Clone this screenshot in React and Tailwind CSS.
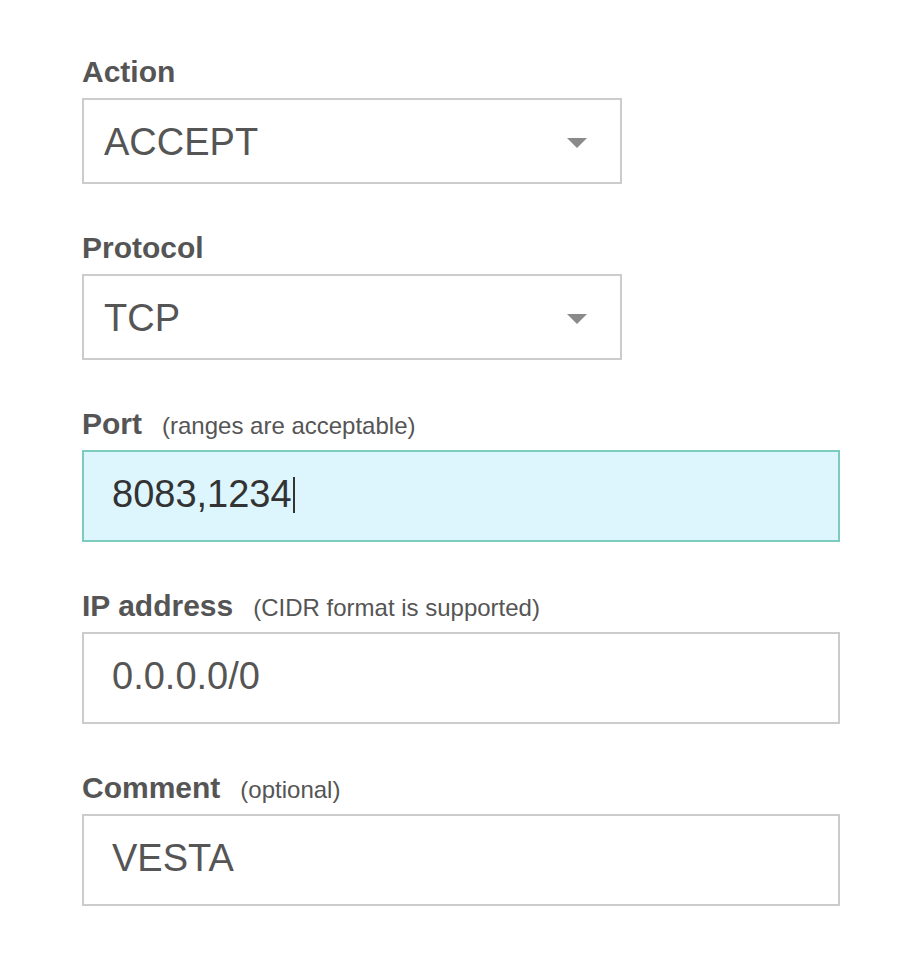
import React from 'react';

const font = { fontFamily: '"Liberation Sans", Arial, Helvetica, sans-serif' };

function Label({ text, hint }) {
  return (
    <div className="flex items-baseline h-[34px] leading-[34px]">
      <span className="text-[30px] font-bold text-[#555]">{text}</span>
      {hint && <span className="ml-5 text-[24px] text-[#555]">{hint}</span>}
    </div>
  );
}

function Select({ value }) {
  return (
    <div className="mt-[9px] w-[540px] h-[86px] border-2 border-[#ccc] bg-white flex items-center justify-between pl-5 pr-[33px]">
      <span className="text-[38px] text-[#555] pt-[3px]">{value}</span>
      <svg width="20" height="10" viewBox="0 0 20 10" className="mt-[3px]">
        <path d="M0 0 L20 0 L10 10 Z" fill="#8a8a8a" />
      </svg>
    </div>
  );
}

function Input({ value, focused, dark }) {
  return (
    <div
      className={
        'mt-[9px] w-[758px] h-[92px] border-2 flex items-center pl-7 pb-[3px] ' +
        (focused ? 'border-[#7ccbbf] bg-[#ddf6fd]' : 'border-[#ccc] bg-white')
      }
    >
      <span className={'text-[38px] ' + (dark ? 'text-[#333]' : 'text-[#555]')}>{value}</span>
      {focused && <span className="ml-[1px] w-[2px] h-[36px] bg-[#333]" />}
    </div>
  );
}

export default function App() {
  return (
    <div className="min-h-[956px] bg-white pl-[82px] pt-[55px]" style={font}>
      <Label text="Action" />
      <Select value="ACCEPT" />

      <div className="mt-[47px]">
        <Label text="Protocol" />
        <Select value="TCP" />
      </div>

      <div className="mt-[47px]">
        <Label text="Port" hint="(ranges are acceptable)" />
        <Input value="8083,1234" focused dark />
      </div>

      <div className="mt-[47px]">
        <Label text="IP address" hint="(CIDR format is supported)" />
        <Input value="0.0.0.0/0" />
      </div>

      <div className="mt-[47px]">
        <Label text="Comment" hint="(optional)" />
        <Input value="VESTA" />
      </div>
    </div>
  );
}
